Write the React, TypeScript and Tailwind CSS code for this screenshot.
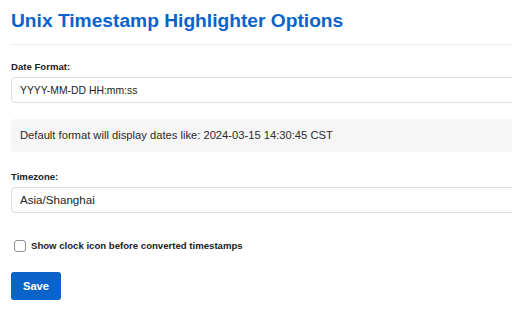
import { useState } from "react";

const fieldClass =
  "block w-full h-[26px] px-[8px] border border-[#dcdcdc] rounded-[4px] bg-white text-[#222] outline-none";

export default function App() {
  const [format, setFormat] = useState("YYYY-MM-DD HH:mm:ss");
  const [timezone, setTimezone] = useState("Asia/Shanghai");
  const [showClock, setShowClock] = useState(false);

  return (
    <div
      className="w-[512px] h-[320px] overflow-hidden bg-white"
      style={{ fontFamily: '"Liberation Sans", Arial, sans-serif' }}
    >
      <div className="w-[560px] px-[11px]">
        <h1 className="pt-[9px] pb-[12px] border-b border-[#ececec] text-[19.2px] leading-[23px] font-bold text-[#0a63c9]">
          Unix Timestamp Highlighter Options
        </h1>

        {/* Date format */}
        <label className="block mt-[16px] mb-[4px] text-[9.6px] leading-[12px] font-bold text-[#222]">
          Date Format:
        </label>
        <input
          className={`${fieldClass} text-[10.4px]`}
          value={format}
          onChange={(e) => setFormat(e.target.value)}
        />

        <div className="mt-[16px] h-[33px] flex items-center px-[9px] rounded-[4px] bg-[#f6f6f6] text-[11.2px] text-[#2a2a2a]">
          Default format will display dates like: 2024-03-15 14:30:45 CST
        </div>

        {/* Timezone */}
        <label className="block mt-[19px] mb-[4px] text-[9.6px] leading-[12px] font-bold text-[#222]">
          Timezone:
        </label>
        <select
          className={`${fieldClass} appearance-none text-[11.6px]`}
          value={timezone}
          onChange={(e) => setTimezone(e.target.value)}
        >
          <option value="Asia/Shanghai">Asia/Shanghai</option>
          <option value="UTC">UTC</option>
        </select>

        <label className="mt-[27px] h-[12px] flex items-center gap-[5px] pl-[3px] text-[9.6px] leading-[12px] font-bold text-[#222]">
          <input
            type="checkbox"
            checked={showClock}
            onChange={(e) => setShowClock(e.target.checked)}
            className="appearance-none w-[12px] h-[12px] border border-[#8f8f8f] rounded-[3px] bg-white checked:bg-[#0a63c9] checked:border-[#0a63c9]"
          />
          Show clock icon before converted timestamps
        </label>

        <button className="mt-[20px] w-[50px] h-[28px] rounded-[3px] bg-[#0a63c9] text-white text-[11.2px] font-bold">
          Save
        </button>
      </div>
    </div>
  );
}
